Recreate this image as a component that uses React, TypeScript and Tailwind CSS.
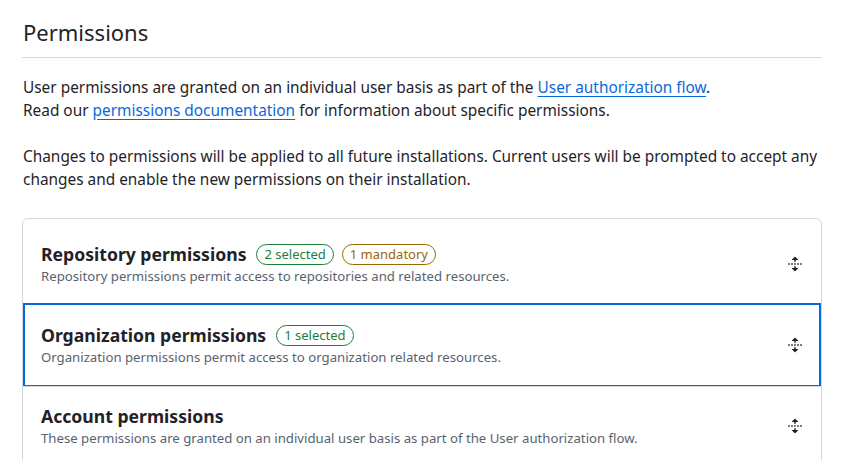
import React from "react";

function UnfoldIcon() {
  return (
    <svg width="16" height="16" viewBox="0 0 16 16" fill="#1f2328" aria-hidden="true">
      <path d="m8.177.677 2.896 2.896a.25.25 0 0 1-.177.427H8.75v1.25a.75.75 0 0 1-1.5 0V4H5.104a.25.25 0 0 1-.177-.427L7.823.677a.25.25 0 0 1 .354 0ZM7.25 10.75a.75.75 0 0 1 1.5 0V12h2.146a.25.25 0 0 1 .177.427l-2.896 2.896a.25.25 0 0 1-.354 0l-2.896-2.896A.25.25 0 0 1 5.104 12H7.25v-1.25Zm-5-2a.75.75 0 0 0 0-1.5h-.5a.75.75 0 0 0 0 1.5h.5ZM6 8a.75.75 0 0 1-.75.75h-.5a.75.75 0 0 1 0-1.5h.5A.75.75 0 0 1 6 8Zm2.25.75a.75.75 0 0 0 0-1.5h-.5a.75.75 0 0 0 0 1.5h.5ZM12 8a.75.75 0 0 1-.75.75h-.5a.75.75 0 0 1 0-1.5h.5A.75.75 0 0 1 12 8Zm2.25.75a.75.75 0 0 0 0-1.5h-.5a.75.75 0 0 0 0 1.5h.5Z" />
    </svg>
  );
}

function Badge({ children, tone }: { children: React.ReactNode; tone: "green" | "orange" }) {
  return (
    <span
      className={
        tone === "green"
          ? "inline-flex items-center h-[21px] px-[7px] rounded-full border border-[#1a7f37] text-[#1a7f37] text-[13px] leading-none"
          : "inline-flex items-center h-[21px] px-[7px] rounded-full border border-[#9a6700] text-[#9a6700] text-[13px] leading-none"
      }
    >
      {children}
    </span>
  );
}

function Row({
  title,
  desc,
  badges,
  focused,
  pad,
}: {
  title: string;
  desc: string;
  badges?: React.ReactNode;
  focused?: boolean;
  pad: string;
}) {
  return (
    <div className={"relative flex items-center pl-[18px] pr-[18px] " + pad}>
      {focused && <div className="absolute inset-x-0 -top-px -bottom-px border-2 border-[#0969da]" />}
      <div className="flex-1 min-w-0">
        <div className="flex items-center">
          <span className="text-[17.6px] leading-[26px] font-bold text-[#1f2328] mr-[10px]">{title}</span>
          <div className="flex items-center gap-[8px]">{badges}</div>
        </div>
        <div className="text-[13.2px] leading-[18px] text-[#59636e]">{desc}</div>
      </div>
      <div className="mt-[2px]">
        <UnfoldIcon />
      </div>
    </div>
  );
}

export default function App() {
  return (
    <div
      className="w-[852px] h-[460px] bg-white overflow-hidden"
      style={{ fontFamily: '"Noto Sans", sans-serif' }}
    >
      <div className="ml-[22px] w-[800px] pt-[16px]">
        <h2 className="text-[22px] leading-[32px] font-normal text-[#1f2328] pb-[9px] border-b border-[#d1d9e0] pl-px">
          Permissions
        </h2>
        <div className="pl-px mt-[18px] text-[15.4px] leading-[23px] text-[#1f2328]">
          <p>
            User permissions are granted on an individual user basis as part of the{" "}
            <a className="text-[#0969da] underline underline-offset-[3px]" href="#">
              User authorization flow
            </a>
            .
            <br />
            Read our{" "}
            <a className="text-[#0969da] underline underline-offset-[3px]" href="#">
              permissions documentation
            </a>{" "}
            for information about specific permissions.
          </p>
          <p className="mt-[23px]">
            Changes to permissions will be applied to all future installations. Current users will be prompted to
            accept any changes and enable the new permissions on their installation.
          </p>
        </div>
        <div className="mt-[27px] border border-[#d1d9e0] rounded-[6px]">
          <Row
            pad="pt-[22px] pb-[18px]"
            title="Repository permissions"
            desc="Repository permissions permit access to repositories and related resources."
            badges={
              <>
                <Badge tone="green">2 selected</Badge>
                <Badge tone="orange">1 mandatory</Badge>
              </>
            }
          />
          <Row
            focused
            pad="pt-[18px] pb-[20px] border-t border-[#d1d9e0]"
            title="Organization permissions"
            desc="Organization permissions permit access to organization related resources."
            badges={<Badge tone="green">1 selected</Badge>}
          />
          <Row
            pad="pt-[16px] pb-[19px] border-t border-[#d1d9e0]"
            title="Account permissions"
            desc="These permissions are granted on an individual user basis as part of the User authorization flow."
          />
        </div>
      </div>
    </div>
  );
}
